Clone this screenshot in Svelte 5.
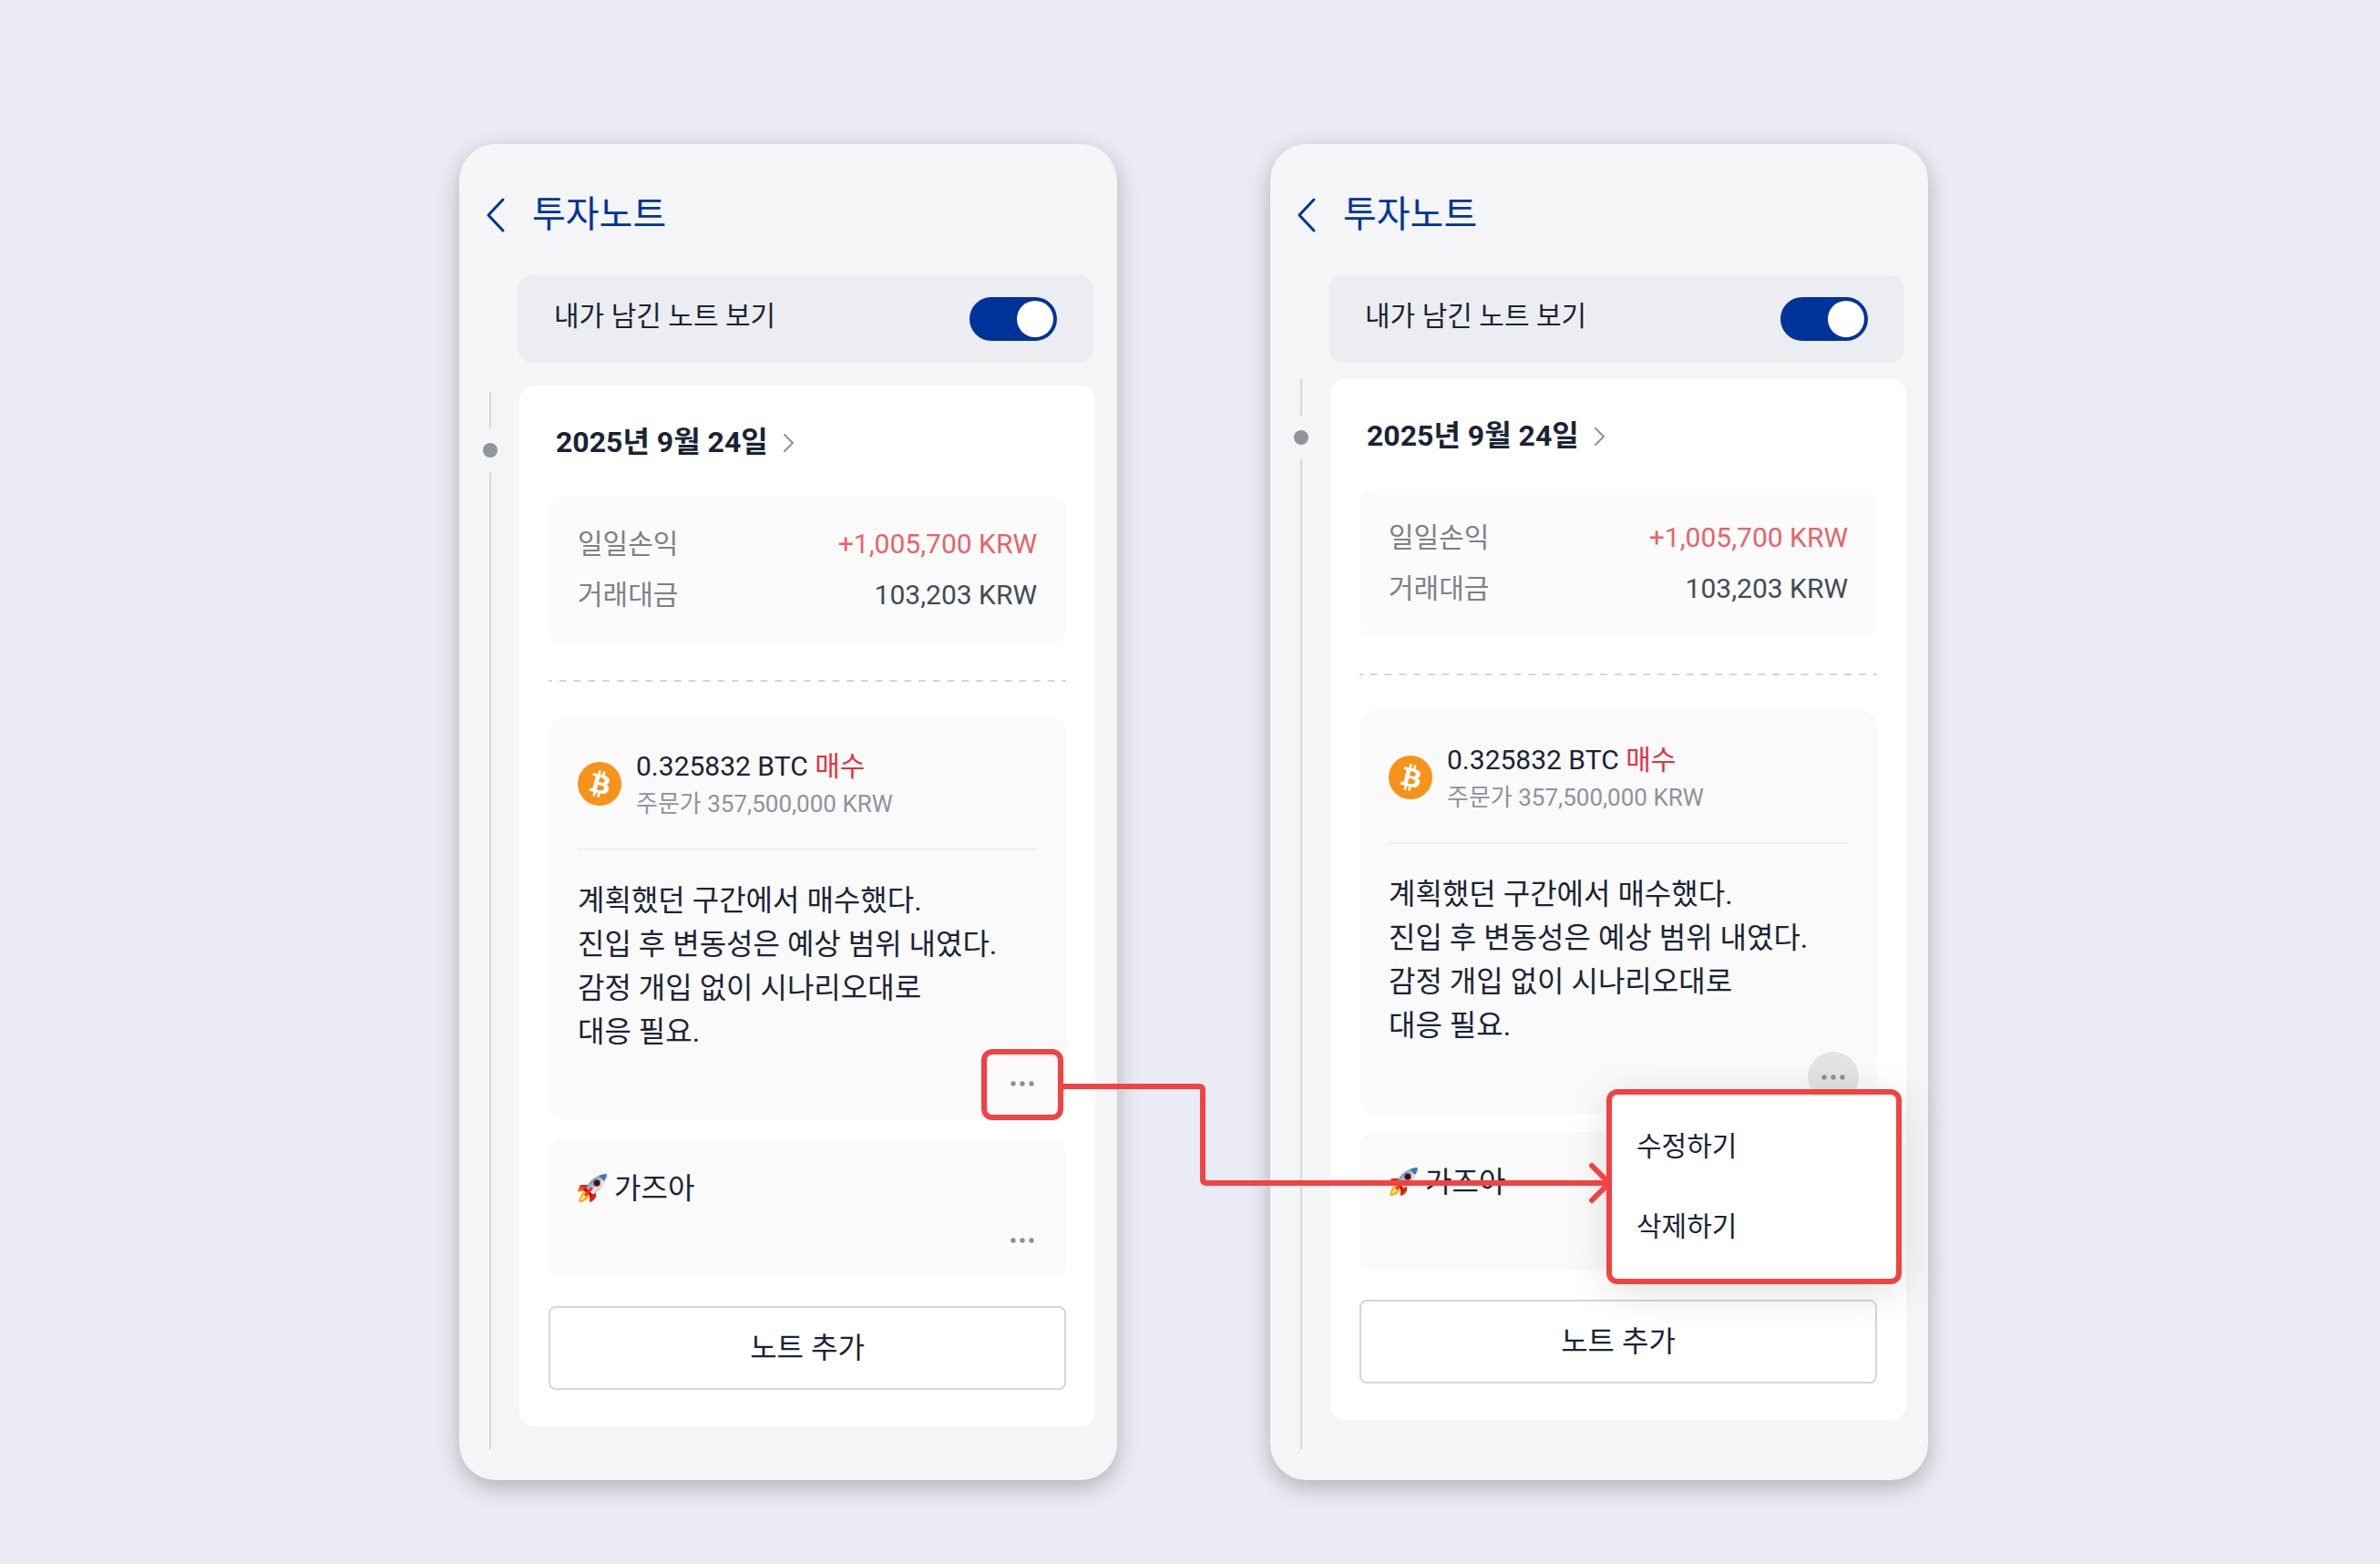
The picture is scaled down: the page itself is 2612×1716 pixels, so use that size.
<script>
	let phones = $state([
		{ id: 'note', open: false, showNotes: true },
		{ id: 'menu', open: true, showNotes: true }
	]);

	const summary = [
		{ label: '일일손익', value: '+1,005,700 KRW', up: true },
		{ label: '거래대금', value: '103,203 KRW', up: false }
	];

	const lines = [
		'계획했던 구간에서 매수했다.',
		'진입 후 변동성은 예상 범위 내였다.',
		'감정 개입 없이 시나리오대로',
		'대응 필요.'
	];
</script>

{#snippet dots()}
	<svg class="dots" viewBox="0 0 28 8" aria-hidden="true">
		<circle cx="4" cy="4" r="2.7" />
		<circle cx="14" cy="4" r="2.7" />
		<circle cx="24" cy="4" r="2.7" />
	</svg>
{/snippet}

{#snippet bitcoin()}
	<svg class="coin" viewBox="0 0 32 32" aria-hidden="true">
		<circle cx="16" cy="16" r="16" fill="#f7931a" />
		<path
			fill="#fff"
			d="M23.19 14.02c.31-2.1-1.29-3.23-3.47-3.99l.71-2.84-1.73-.43-.69 2.76c-.45-.11-.92-.22-1.39-.33l.7-2.78-1.73-.43-.71 2.84c-.38-.09-.75-.17-1.1-.26v-.01l-2.39-.6-.46 1.85s1.29.3 1.26.31c.7.18.83.64.81 1.01l-.81 3.23c.05.01.11.03.18.06l-.18-.05-1.13 4.53c-.09.21-.3.53-.79.41.02.03-1.26-.31-1.26-.31l-.86 1.98 2.25.56c.42.11.83.22 1.23.32l-.72 2.87 1.73.43.71-2.84c.47.13.93.25 1.38.36l-.71 2.83 1.73.43.72-2.87c2.95.56 5.17.33 6.1-2.34.75-2.15-.04-3.39-1.59-4.2 1.13-.26 1.98-1 2.21-2.53zm-3.95 5.54c-.53 2.15-4.15.99-5.33.69l.95-3.81c1.17.3 4.93.88 4.38 3.12zm.54-5.57c-.49 1.96-3.5.96-4.48.72l.86-3.46c.98.25 4.13.7 3.62 2.74z"
		/>
	</svg>
{/snippet}

{#snippet rocket()}
	<svg class="rocket" viewBox="0 0 32 32" role="img" aria-label="로켓">
		<defs>
			<linearGradient id="hull" x1="0" y1="0" x2="1" y2="1">
				<stop offset="0.2" stop-color="#4a86bd" />
				<stop offset="0.48" stop-color="#a9c9e4" />
				<stop offset="0.6" stop-color="#e6e8ea" />
				<stop offset="0.85" stop-color="#77797e" />
			</linearGradient>
			<linearGradient id="fin" x1="1" y1="0" x2="0" y2="1">
				<stop offset="0.3" stop-color="#e8200c" />
				<stop offset="1" stop-color="#ffa01c" />
			</linearGradient>
		</defs>
		<path fill="url(#fin)" d="M12 12 3 12Q0 16 0 20L9 18Z" />
		<path fill="#e8200c" d="m20 20 0 5q-2 5-7 6l0-9Z" />
		<path fill="#ff9d12" d="M8 19Q3 21 1 31q8 0 12-7Z" />
		<path fill="#ffe45c" d="M8 21Q4 24 3 29q5-1 8-5Z" />
		<path fill="url(#hull)" d="M32 0Q21 1 15 7 10 12 8 19l5 5q7-2 12-8Q31 9 32 0Z" />
		<path fill="#3f78b3" d="M32 0q-5 0-9 2l6 6q3-4 3-8Z" />
		<path fill="#b8141a" d="m6 18 3-3 8 8-3 3q-2-5-8-8Z" />
		<path fill="none" stroke="#ff2c18" stroke-width="3" stroke-linecap="round" d="m9 23 6-7" />
		<circle cx="21" cy="10" r="4" fill="#d4322c" />
		<circle cx="21" cy="10" r="3" fill="#25191d" />
	</svg>
{/snippet}

<main>
	<div class="board">
		{#each phones as phone (phone.id)}
			<section class="phone" class:scrolled={phone.open}>
				<header>
					<button class="back" aria-label="뒤로">
						<svg viewBox="0 0 24 40"><path d="M20 3 4 20 20 37" /></svg>
					</button>
					<h1>투자노트</h1>
				</header>

				<label class="filter">
					<span>내가 남긴 노트 보기</span>
					<input type="checkbox" bind:checked={phone.showNotes} />
				</label>

				<div class="timeline">
					<div class="rail">
						<i class="line"></i>
						<i class="dot"></i>
						<i class="line rest"></i>
					</div>

					<article class="day">
						<a class="date" href="#day">
							<span>2025년 9월 24일</span>
							<svg viewBox="0 0 14 20"><path d="m2 1 9 9-9 9" /></svg>
						</a>

						<dl class="summary">
							{#each summary as row}
								<div>
									<dt>{row.label}</dt>
									<dd class:up={row.up}>{row.value}</dd>
								</div>
							{/each}
						</dl>

						<hr class="dashed" />

						<div class="note">
							<div class="trade">
								{@render bitcoin()}
								<div>
									<p class="amount">0.325832 BTC <span>매수</span></p>
									<p class="price">주문가 357,500,000 KRW</p>
								</div>
							</div>
							<p class="text">
								{#each lines as line}
									{line}<br />
								{/each}
							</p>
							<div class="actions">
								<button
									class="more"
									class:active={phone.open}
									aria-label="더보기"
									onclick={() => (phone.open = !phone.open)}
								>
									{@render dots()}
								</button>
								{#if phone.open}
									<div class="menu">
										<button>수정하기</button>
										<button>삭제하기</button>
									</div>
								{:else}
									<span class="mark"></span>
								{/if}
							</div>
						</div>

						<div class="note short">
							<p class="text">{@render rocket()}가즈아</p>
							<div class="actions">
								<button class="more" aria-label="더보기">{@render dots()}</button>
							</div>
						</div>

						<button class="add">노트 추가</button>
					</article>
				</div>
			</section>
		{/each}

		<svg class="arrow" viewBox="0 0 606 140" aria-hidden="true">
			<path d="M0 11H149Q153 11 153 15V113Q153 117 157 117H599" />
			<path d="M580 98 599 117 580 136" />
		</svg>
	</div>
</main>

<style>
	:global(body) {
		background: #ebebf5;
	}

	main {
		box-sizing: border-box;
		min-height: 100vh;
		padding: 158px 0 92px 8px;
		display: flex;
		justify-content: center;
		align-items: flex-start;
		font-family: Roboto, 'Noto Sans CJK KR', sans-serif;
		color: #1a2336;
	}

	button,
	input {
		font: inherit;
		color: inherit;
		margin: 0;
		padding: 0;
		border: 0;
		background: none;
		cursor: pointer;
	}

	h1,
	p,
	dl,
	dd {
		margin: 0;
	}

	svg {
		display: block;
		fill: none;
		stroke-linecap: round;
		stroke-linejoin: round;
	}

	.board {
		position: relative;
		display: flex;
		gap: 168px;
	}

	.phone {
		box-sizing: border-box;
		flex: 0 1 722px;
		width: 722px;
		display: flex;
		flex-direction: column;
		padding: 48px 24px 34px 26px;
		border-radius: 40px;
		background: #f3f5f7;
		box-shadow: 0 8px 24px rgba(0, 0, 0, 0.25);
	}

	header {
		display: flex;
		align-items: center;
		gap: 28px;
		height: 60px;
		margin-bottom: 36px;
		color: #003399;
	}

	.back svg {
		width: 24px;
		height: 40px;
		margin-left: 2px;
		stroke: currentColor;
		stroke-width: 3;
	}

	h1 {
		font-size: 40px;
		line-height: 60px;
		font-weight: 400;
	}

	.filter {
		box-sizing: border-box;
		height: 96px;
		margin-left: 38px;
		margin-right: 2px;
		padding: 0 40px;
		display: flex;
		align-items: center;
		justify-content: space-between;
		border-radius: 16px;
		background: #ecedf1;
		font-size: 30px;
		line-height: 44px;
	}

	.filter span {
		padding-bottom: 6px;
	}

	.filter input {
		appearance: none;
		box-sizing: border-box;
		width: 96px;
		height: 48px;
		padding: 4px;
		display: flex;
		border-radius: 24px;
		background: #a3a7b0;
	}

	.filter input::before {
		content: '';
		width: 40px;
		height: 40px;
		border-radius: 50%;
		background: #fff;
	}

	.filter input:checked {
		justify-content: flex-end;
		background: #003399;
	}

	.timeline {
		flex: 1;
		display: flex;
		gap: 24px;
		margin-top: 25px;
	}

	.scrolled .timeline {
		margin-top: 18px;
	}

	.rail {
		width: 16px;
		padding-top: 7px;
		display: flex;
		flex-direction: column;
		align-items: center;
		gap: 16px;
	}

	.scrolled .rail {
		padding-top: 0;
	}

	.line {
		width: 2px;
		height: 40px;
		background: #d5d7dc;
	}

	.rest {
		flex: 1;
	}

	.dot {
		width: 16px;
		height: 16px;
		border-radius: 50%;
		background: #8f949e;
	}

	.day {
		flex: 1;
		align-self: flex-start;
		margin-bottom: 25px;
		padding: 38px 32px 40px;
		border-radius: 16px;
		background: #fff;
	}

	.date {
		display: flex;
		align-items: center;
		gap: 16px;
		margin: 0 8px 34px;
		font-size: 32px;
		line-height: 48px;
		font-weight: 700;
		color: inherit;
		text-decoration: none;
	}

	.date svg {
		width: 14px;
		height: 20px;
		margin-top: 2px;
		stroke: #8f929c;
		stroke-width: 2;
	}

	.summary {
		padding: 26px 32px;
		border-radius: 16px;
		background: #fbfbfb;
		font-size: 30px;
		line-height: 56px;
	}

	.summary div {
		display: flex;
		justify-content: space-between;
	}

	dt {
		color: #7d808a;
	}

	dd {
		color: #414b5a;
	}

	.up {
		color: #e6646a;
	}

	.dashed {
		height: 2px;
		margin: 39px 0;
		border: 0;
		background: linear-gradient(90deg, #d5d6dc 25%, transparent 25% 75%, #d5d6dc 75%);
		background-size: 16px 2px;
		background-repeat: round;
	}

	.note {
		padding: 32px 32px 12px;
		border-radius: 16px;
		background: #fafafa;
	}

	.short {
		margin-top: 20px;
		padding-top: 31px;
	}

	.trade {
		display: flex;
		align-items: center;
		gap: 16px;
		padding-bottom: 30px;
		margin-bottom: 31px;
		border-bottom: 2px solid #eeeff3;
	}

	.coin {
		width: 48px;
		height: 48px;
	}

	.amount {
		font-size: 30px;
		line-height: 44px;
	}

	.amount span {
		color: #e3323e;
	}

	.price {
		font-size: 26px;
		line-height: 38px;
		color: #8f929c;
	}

	.text {
		font-size: 32px;
		line-height: 48px;
	}

	.short .text {
		display: flex;
		align-items: center;
		gap: 8px;
	}

	.rocket {
		width: 32px;
		height: 32px;
	}

	.actions {
		position: relative;
		display: flex;
		justify-content: flex-end;
		margin-top: 5px;
		margin-right: -12px;
	}

	.more {
		width: 56px;
		height: 56px;
		display: grid;
		place-items: center;
		border-radius: 50%;
	}

	.more.active {
		background: #e3e3e3;
	}

	.dots {
		width: 28px;
		height: 8px;
		fill: #8a8f99;
	}

	.mark {
		position: absolute;
		top: -10px;
		right: -17px;
		box-sizing: border-box;
		width: 90px;
		height: 78px;
		border: 6px solid #f24242;
		border-radius: 12px;
		pointer-events: none;
	}

	.menu {
		position: absolute;
		z-index: 1;
		top: 41px;
		right: -47px;
		box-sizing: border-box;
		width: 324px;
		padding: 13px 0;
		display: flex;
		flex-direction: column;
		border: 6px solid #f24242;
		border-radius: 12px;
		background: #fff;
		box-shadow: 0 8px 48px rgba(0, 0, 0, 0.12);
	}

	.menu button {
		padding: 0 27px;
		font-size: 30px;
		line-height: 88px;
		text-align: left;
	}

	.add {
		box-sizing: border-box;
		width: 100%;
		height: 92px;
		margin-top: 32px;
		padding-bottom: 6px;
		border: 2px solid #d5d6dc;
		border-radius: 8px;
		font-size: 32px;
	}

	.arrow {
		position: absolute;
		z-index: 2;
		left: 663px;
		top: 1023px;
		width: 606px;
		height: 140px;
		stroke: #f24242;
		stroke-width: 6;
		pointer-events: none;
	}
</style>
